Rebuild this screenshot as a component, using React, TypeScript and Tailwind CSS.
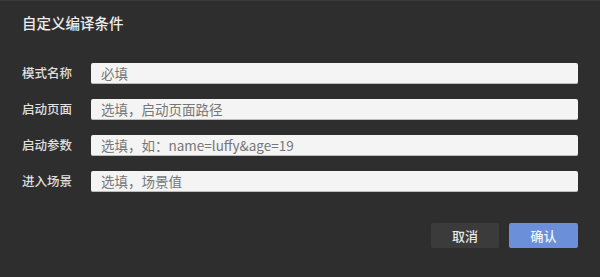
const fields = [
  { label: "模式名称", placeholder: "必填" },
  { label: "启动页面", placeholder: "选填，启动页面路径" },
  { label: "启动参数", placeholder: "选填，如：name=luffy&age=19" },
  { label: "进入场景", placeholder: "选填，场景值" },
];

export default function App() {
  return (
    <div
      className="w-[600px] h-[277px] bg-[#2e2e2e] border-t border-[#3a3a3a] text-[#e6e6e6] overflow-hidden"
      style={{ fontFamily: '"Noto Sans CJK SC", "Noto Sans", sans-serif' }}
    >
      <div className="pl-[22px] pt-[12px] h-[62px]">
        <h1 className="text-[14.5px] leading-[20px] font-medium text-[#ececec]">自定义编译条件</h1>
      </div>

      <div className="flex flex-col gap-[15px] pl-[22px] pr-[22px]">
        {fields.map((f) => (
          <div key={f.label} className="flex items-center h-[21px]">
            <label className="w-[69px] shrink-0 text-[12.5px] font-medium text-[#e0e0e0]">{f.label}</label>
            <input
              placeholder={f.placeholder}
              className="flex-1 h-[21px] rounded-[2px] bg-[#f4f4f4] border-b border-[#bdbdbd] px-[10px] text-[13.5px] text-[#333] placeholder:text-[#777] outline-none"
              style={{ fontFamily: '"Noto Sans CJK SC", "Noto Sans", sans-serif' }}
            />
          </div>
        ))}
      </div>

      <div className="flex justify-end gap-[10px] pr-[22px] mt-[31px]">
        <button className="w-[68px] h-[25px] rounded-[2px] bg-[#3b3b3b] text-[13px] font-medium text-[#e8e8e8]">
          取消
        </button>
        <button className="w-[69px] h-[25px] rounded-[2px] bg-[#6b8fd8] text-[13px] font-medium text-[#f2f4fa]">
          确认
        </button>
      </div>
    </div>
  );
}
